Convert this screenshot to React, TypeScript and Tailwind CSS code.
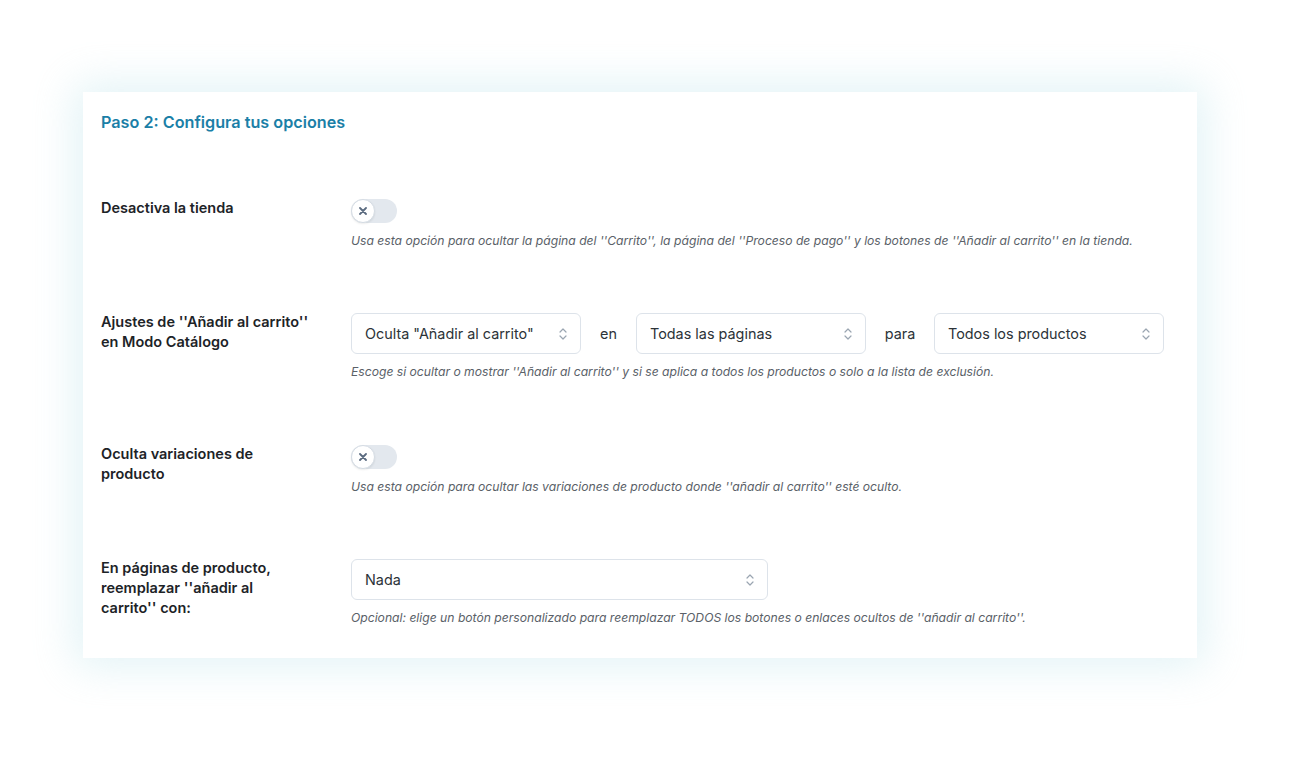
import { ReactNode } from 'react';

const font = { fontFamily: 'Inter, "Noto Sans", sans-serif' };

function Toggle() {
  return (
    <div className="relative w-[46px] h-[24px] rounded-full bg-[#e3e8ee]">
      <div className="absolute left-0 top-0 w-[24px] h-[24px] rounded-full bg-white border border-[#d5dce4] shadow-[0_1px_2px_rgba(0,0,0,0.08)] flex items-center justify-center">
        <svg width="8" height="8" viewBox="0 0 8 8">
          <path d="M1 1L7 7M7 1L1 7" stroke="#5b6b80" strokeWidth="1.8" strokeLinecap="round" />
        </svg>
      </div>
    </div>
  );
}

function Select({ value, width }: { value: string; width: string }) {
  return (
    <div className={`${width} h-[41px] rounded-[6px] border border-[#dde3ea] bg-white flex items-center justify-between pl-[13px] pr-[12px]`}>
      <span className="text-[14.4px] text-[#2c3338]">{value}</span>
      <svg width="10" height="14" viewBox="0 0 10 14" fill="none">
        <path d="M2 5L5 2L8 5M2 9L5 12L8 9" stroke="#9aa5b1" strokeWidth="1.2" strokeLinecap="round" strokeLinejoin="round" />
      </svg>
    </div>
  );
}

function Row({ label, desc, children }: { label: ReactNode; desc: string; children: ReactNode }) {
  return (
    <div className="flex">
      <div className="w-[250px] shrink-0 text-[14.5px] leading-[20px] font-semibold text-[#1d2327] -mt-[1px]">{label}</div>
      <div className="flex flex-col">
        {children}
        <p className="italic text-[12.15px] leading-[16px] text-[#5a6168] mt-[10px]">{desc}</p>
      </div>
    </div>
  );
}

export default function App() {
  return (
    <div className="min-h-[759px] w-full bg-white pt-[92px]" style={font}>
      <div className="ml-[83px] w-[1114px] bg-white shadow-[0_0_40px_8px_rgba(190,228,236,0.45)] pl-[18px] pt-[20px] pb-[32px]">
        <h2 className="text-[16.2px] leading-[20px] font-semibold text-[#1b7fa7]">Paso 2: Configura tus opciones</h2>
        <div className="mt-[67px] flex flex-col gap-[64px]">
          <Row
            label="Desactiva la tienda"
            desc="Usa esta opción para ocultar la página del ''Carrito'', la página del ''Proceso de pago'' y los botones de ''Añadir al carrito'' en la tienda."
          >
            <Toggle />
          </Row>
          <Row
            label={<><span className="block">Ajustes de ''Añadir al carrito''</span><span className="block">en Modo Catálogo</span></>}
            desc="Escoge si ocultar o mostrar ''Añadir al carrito'' y si se aplica a todos los productos o solo a la lista de exclusión."
          >
            <div className="flex items-center">
              <Select value={'Oculta "Añadir al carrito"'} width="w-[230px]" />
              <span className="w-[55px] text-center text-[14.4px] text-[#2c3338]">en</span>
              <Select value="Todas las páginas" width="w-[230px]" />
              <span className="w-[68px] text-center text-[14.4px] text-[#2c3338]">para</span>
              <Select value="Todos los productos" width="w-[230px]" />
            </div>
          </Row>
          <div className="mt-[1px]">
            <Row
              label={<><span className="block">Oculta variaciones de</span><span className="block">producto</span></>}
              desc="Usa esta opción para ocultar las variaciones de producto donde ''añadir al carrito'' esté oculto."
            >
              <Toggle />
            </Row>
          </div>
          <Row
            label={<><span className="block">En páginas de producto,</span><span className="block">reemplazar ''añadir al</span><span className="block">carrito'' con:</span></>}
            desc="Opcional: elige un botón personalizado para reemplazar TODOS los botones o enlaces ocultos de ''añadir al carrito''."
          >
            <Select value="Nada" width="w-[417px]" />
          </Row>
        </div>
      </div>
    </div>
  );
}
